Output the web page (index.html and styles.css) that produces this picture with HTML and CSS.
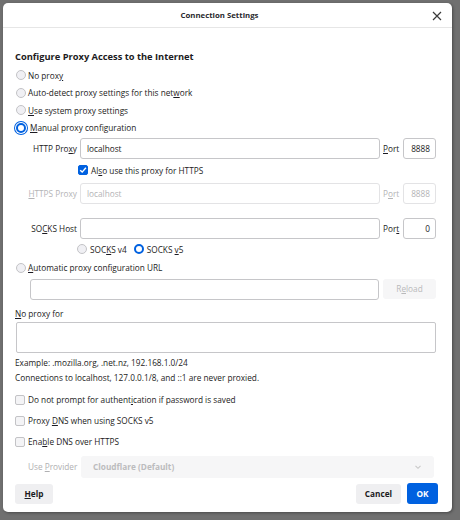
FILE: index.html
```html
<!DOCTYPE html>
<html>
<head>
<meta charset="utf-8">
<link rel="stylesheet" href="styles.css">
</head>
<body>
<div class="dialog">
  <div class="header">
    <span class="title">Connection Settings</span>
    <svg class="close" width="10" height="10" viewBox="0 0 10 10"><path d="M1 1L9 9M9 1L1 9" stroke="#3a3a3a" stroke-width="1.2"/></svg>
  </div>
  <div class="content">
    <div class="heading">Configure Proxy Access to the Internet</div>
    <div class="radio-row"><span class="radio"></span><span>No prox<u>y</u></span></div>
    <div class="radio-row"><span class="radio"></span><span>Auto-detect proxy settings for this net<u>w</u>ork</span></div>
    <div class="radio-row"><span class="radio"></span><span><u>U</u>se system proxy settings</span></div>
    <div class="radio-row"><span class="radio checked focus"></span><span><u>M</u>anual proxy configuration</span></div>

    <div class="proxy-grid http">
      <span class="plabel">HTTP Pro<u>x</u>y</span>
      <span class="input">localhost</span>
      <span class="portlabel"><u>P</u>ort</span>
      <span class="input port">8888</span>
    </div>
    <div class="check-row also"><span class="checkbox checked"><svg width="8" height="8" viewBox="0 0 8 8"><path d="M1.2 4.2L3.2 6.1L6.9 1.8" fill="none" stroke="#fff" stroke-width="1.4"/></svg></span><span>Al<u>s</u>o use this proxy for HTTPS</span></div>
    <div class="proxy-grid https disabled">
      <span class="plabel"><u>H</u>TTPS Proxy</span>
      <span class="input">localhost</span>
      <span class="portlabel">P<u>o</u>rt</span>
      <span class="input port">8888</span>
    </div>
    <div class="proxy-grid socks">
      <span class="plabel">SO<u>C</u>KS Host</span>
      <span class="input"></span>
      <span class="portlabel">Por<u>t</u></span>
      <span class="input port">0</span>
    </div>
    <div class="socks-row">
      <span class="radio"></span><span>SOC<u>K</u>S v4</span>
      <span class="radio checked v5"></span><span>SOCKS <u>v</u>5</span>
    </div>
    <div class="radio-row auto"><span class="radio"></span><span><u>A</u>utomatic proxy configuration URL</span></div>
    <div class="url-row">
      <span class="input url"></span>
      <span class="button reload">R<u>e</u>load</span>
    </div>
    <div class="label-line noproxy"><u>N</u>o proxy for</div>
    <div class="textarea"></div>
    <div class="label-line example">Example: .mozilla.org, .net.nz, 192.168.1.0/24</div>
    <div class="label-line">Connections to localhost, 127.0.0.1/8, and ::1 are never proxied.</div>
    <div class="check-row first"><span class="checkbox"></span><span>Do not prompt for authent<u>i</u>cation if password is saved</span></div>
    <div class="check-row"><span class="checkbox"></span><span>Proxy <u>D</u>NS when using SOCKS v5</span></div>
    <div class="check-row"><span class="checkbox"></span><span>Ena<u>b</u>le DNS over HTTPS</span></div>
    <div class="provider-row">
      <span class="provlabel">Use <u>P</u>rovider</span>
      <span class="select">Cloudflare (Default)<svg width="8" height="6" viewBox="0 0 8 6"><path d="M1.5 1.8L4 4.3L6.5 1.8" fill="none" stroke="#c8c8c8" stroke-width="1.1"/></svg></span>
    </div>
    <div class="footer">
      <span class="button help"><u>H</u>elp</span>
      <span class="spacer"></span>
      <span class="button cancel">Cancel</span>
      <span class="button ok">OK</span>
    </div>
  </div>
</div>
</body>
</html>
```
FILE: styles.css
```css
* { box-sizing: border-box; }
html, body { margin: 0; padding: 0; }
body {
  width: 460px;
  height: 520px;
  background: #707070;
  font-family: "Open Sans", "Noto Sans", sans-serif;
  font-size: 8.25px;
  color: #1c1b22;
  overflow: hidden;
  padding: 3px 0 0 3px;
}
u { text-decoration: underline; text-underline-offset: 1px; text-decoration-thickness: 1px; }
.dialog {
  width: 449px;
  height: 509px;
  background: #fff;
  border-radius: 5px;
  box-shadow: 1px 1px 3px rgba(0,0,0,0.35);
  display: flex;
  flex-direction: column;
}
.header {
  height: 25px;
  border-bottom: 1px solid #e6e6e6;
  display: flex;
  align-items: center;
  justify-content: center;
  position: relative;
  flex: none;
  padding-right: 16px;
}
.title { font-weight: 700; font-size: 7.8px; color: #2a2a2e; }
.close { position: absolute; right: 10px; top: 8px; }
.content {
  padding: 22px 16px 0 12px;
  display: flex;
  flex-direction: column;
  flex: 1;
}
.heading { font-weight: 700; font-size: 9.3px; line-height: 14px; height: 14px; }
.radio-row {
  height: 17.5px;
  display: flex;
  align-items: center;
  gap: 2px;
}
.heading + .radio-row { margin-top: 2.3px; }
.radio {
  width: 10px;
  height: 10px;
  border-radius: 50%;
  border: 1px solid #c3c3c6;
  background: #f0f0f4;
  flex: none;
  margin-left: 1px;
  margin-right: 0;
  position: relative;
}
.radio.checked {
  border: 2.6px solid #0061e0;
  background: #fff;
}
.radio.focus {
  box-shadow: 0 0 0 1px #fff, 0 0 0 2px #0061e0;
  margin-right: 2px;
}
.proxy-grid {
  display: grid;
  grid-template-columns: 62px 1fr 17px 33px;
  column-gap: 3px;
  align-items: center;
  height: 21px;
}
.proxy-grid.http { margin-top: 2px; }
.proxy-grid.https { margin-top: 6px; }
.proxy-grid.socks { margin-top: 14px; }
.plabel { text-align: right; white-space: nowrap; }
.portlabel { white-space: nowrap; }
.input {
  height: 21px;
  border: 1px solid #c6c6c9;
  border-radius: 3px;
  display: flex;
  align-items: center;
  padding: 0 6px;
  background: #fff;
}
.input.port { justify-content: flex-end; padding: 0 5px; }
.disabled { color: #b4b4b6; }
.disabled .input { border-color: #e3e3e5; }
.check-row {
  height: 14px;
  display: flex;
  align-items: center;
  gap: 3px;
  margin-top: 7px;
}
.check-row.also { margin-top: 4px; padding-left: 63px; gap: 3px; }
.check-row.first { margin-top: 8px; }
.checkbox {
  width: 10px;
  height: 10px;
  border: 1px solid #c3c3c6;
  border-radius: 2px;
  background: #f4f4f6;
  flex: none;
  display: flex;
  align-items: center;
  justify-content: center;
}
.checkbox.checked { background: #0061e0; border-color: #0061e0; }
.socks-row {
  height: 14px;
  margin-top: 3px;
  display: flex;
  align-items: center;
  padding-left: 61px;
  gap: 3px;
}
.socks-row .v5 { margin-left: 4px; }
.radio-row.auto { margin-top: 2.5px; }
.url-row {
  margin-top: 2.5px;
  display: flex;
  gap: 4px;
  padding-left: 15px;
  height: 21px;
}
.url-row .url { flex: 1; }
.button {
  display: flex;
  align-items: center;
  justify-content: center;
  border-radius: 3px;
  background: #efeff1;
  font-weight: 700;
}
.reload { width: 53px; height: 20px; color: #b9b9bb; font-weight: 400; background: #f6f6f7; }
.label-line { height: 14px; line-height: 14px; margin-top: 1px; }
.noproxy { margin-top: 7px; }
.textarea {
  margin-top: 1px;
  height: 31px;
  border: 1px solid #c6c6c9;
  border-radius: 2px;
  margin-left: 1px;
}
.example { margin-top: 3px; }
.provider-row {
  margin-top: 7px;
  height: 22px;
  display: flex;
  align-items: center;
  padding-left: 13px;
  gap: 5px;
  padding-right: 2px;
}
.provlabel { color: #b0b0b2; width: 48px; white-space: nowrap; }
.select {
  flex: 1;
  height: 22px;
  background: #f6f6f7;
  border-radius: 3px;
  color: #bcbcbe;
  font-weight: 700;
  display: flex;
  align-items: center;
  justify-content: space-between;
  padding: 0 12px 0 12px;
}
.footer {
  margin-top: 6px;
  display: flex;
  align-items: center;
  height: 20px;
  margin-right: -2px;
  gap: 6px;
}
.spacer { flex: 1; }
.help { width: 38px; height: 20px; }
.cancel { width: 45px; height: 20px; }
.ok { width: 31px; height: 21px; background: #0061e0; color: #fff; }
```
